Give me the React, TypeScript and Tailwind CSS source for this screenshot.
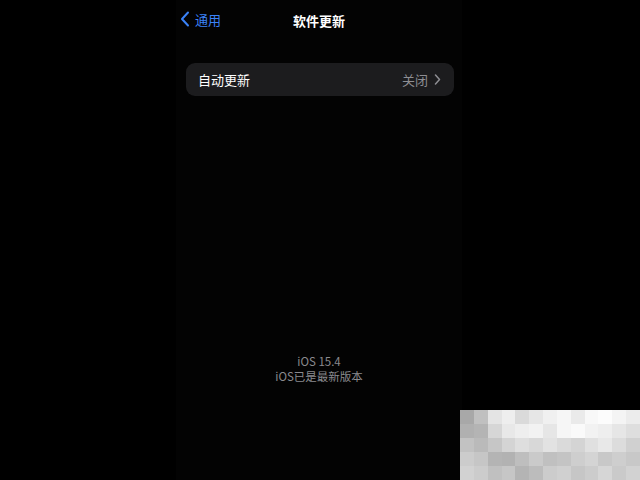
import React from 'react';

const font = { fontFamily: '"Noto Sans CJK SC", "Noto Sans", sans-serif' };

const Watermark: React.FC = () => {
  const rows = [
    ['#a8a8a8', '#c0c0c0', '#e4e4e4', '#eeeeee', '#dadada', '#e6e6e6', '#f0f0f0', '#f6f6f6', '#eaeaea', '#f8f8f8', '#fcfcfc', '#f4f4f4', '#ececec'],
    ['#b0b0b0', '#b4b4b4', '#d6d6d6', '#e8e8e8', '#eeeeee', '#f2f2f2', '#e6e6e6', '#f6f6f6', '#fafafa', '#f2f2f2', '#eeeeee', '#e6e6e6', '#dedede'],
    ['#c2c2c2', '#bababa', '#c6c6c6', '#d4d4d4', '#dedede', '#d8d8d8', '#e2e2e2', '#dadada', '#d4d4d4', '#e0e0e0', '#e8e8e8', '#dcdcdc', '#d0d0d0'],
    ['#cccccc', '#c6c6c6', '#b4b4b4', '#b2b2b2', '#bebebe', '#cacaca', '#c0c0c0', '#c4c4c4', '#cecece', '#d4d4d4', '#c8c8c8', '#cecece', '#c8c8c8'],
    ['#d2d2d2', '#cccccc', '#c0c0c0', '#c6c6c6', '#b4b4b4', '#bcbcbc', '#cccccc', '#d0d0d0', '#c6c6c6', '#cccccc', '#d6d6d6', '#cacaca', '#d2d2d2'],
  ];
  return (
    <div className="absolute left-[460px] top-[410px] w-[180px] h-[70px] flex flex-col">
      {rows.map((row, i) => (
        <div key={i} className="flex flex-1">
          {row.map((c, j) => (
            <div key={j} className="flex-1" style={{ backgroundColor: c }} />
          ))}
        </div>
      ))}
    </div>
  );
};

const App: React.FC = () => {
  return (
    <div className="relative w-[640px] h-[480px] bg-black overflow-hidden" style={font}>
      <div className="ml-[176px] w-[286px] h-full bg-[#030303] flex flex-col">
        {/* Nav bar */}
        <div className="relative h-[40px] flex items-center justify-center">
          <div className="absolute left-[4px] top-[11px] flex items-center text-[#3a82f7]">
            <svg width="10" height="16" viewBox="0 0 10 16" fill="none">
              <path d="M8 1.5 L2 8 L8 14.5" stroke="currentColor" strokeWidth="2" strokeLinecap="round" strokeLinejoin="round" />
            </svg>
            <span className="ml-[5px] text-[13px] leading-none">通用</span>
          </div>
          <span className="text-white text-[13px] font-bold leading-none">软件更新</span>
        </div>

        {/* Auto update row */}
        <div className="mt-[23px] ml-[10px] mr-[8px] h-[33px] rounded-[9px] bg-[#1c1c1e] flex items-center justify-between pl-[12px] pr-[13px]">
          <span className="text-white text-[13px] leading-none">自动更新</span>
          <div className="flex items-center text-[#8e8e93]">
            <span className="text-[13px] leading-none">关闭</span>
            <svg className="ml-[6px]" width="7" height="11" viewBox="0 0 7 11" fill="none">
              <path d="M1.5 1 L5.5 5.5 L1.5 10" stroke="currentColor" strokeWidth="1.5" strokeLinecap="round" strokeLinejoin="round" />
            </svg>
          </div>
        </div>

        {/* Version info */}
        <div className="mt-[257px] flex flex-col items-center text-[#8a8a8e] text-[11.5px] leading-[16px]">
          <span>iOS 15.4</span>
          <span className="-mt-[1px]">iOS已是最新版本</span>
        </div>
      </div>
      <Watermark />
    </div>
  );
};

export default App;
